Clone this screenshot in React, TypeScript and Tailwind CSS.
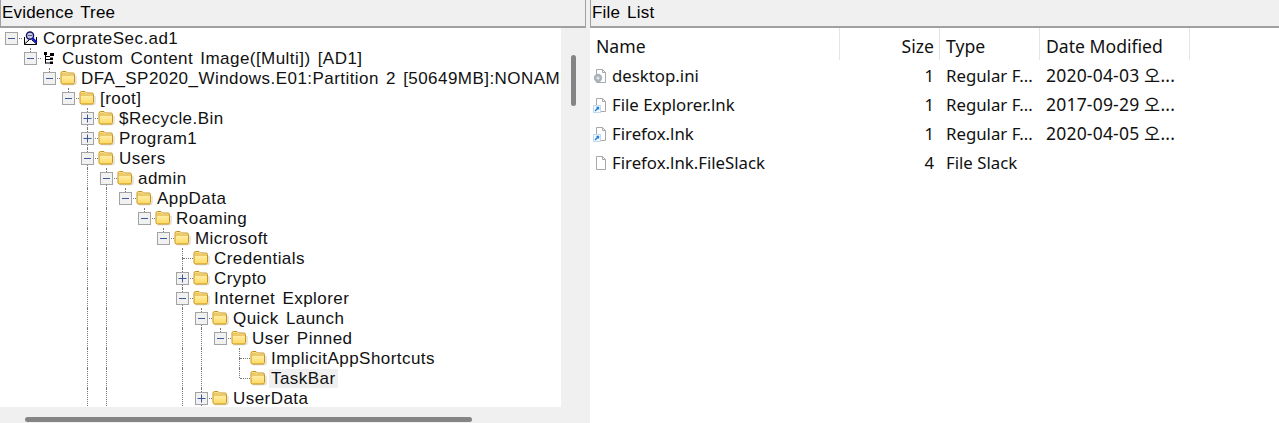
type TreeNode = {
  label: string;
  icon?: "evidence" | "tree" | "folder";
  open?: boolean;
  closed?: boolean;
  more?: boolean;
  selected?: boolean;
  children?: TreeNode[];
};

const tree: TreeNode = {
  label: "CorprateSec.ad1",
  icon: "evidence",
  open: true,
  children: [
    {
      label: "Custom Content Image([Multi]) [AD1]",
      icon: "tree",
      open: true,
      children: [
        {
          label: "DFA_SP2020_Windows.E01:Partition 2 [50649MB]:NONAME",
          open: true,
          children: [
            {
              label: "[root]",
              open: true,
              children: [
                { label: "$Recycle.Bin", closed: true, more: true },
                { label: "Program1", closed: true, more: true },
                {
                  label: "Users",
                  open: true,
                  more: true,
                  children: [
                    {
                      label: "admin",
                      open: true,
                      more: true,
                      children: [
                        {
                          label: "AppData",
                          open: true,
                          children: [
                            {
                              label: "Roaming",
                              open: true,
                              children: [
                                {
                                  label: "Microsoft",
                                  open: true,
                                  children: [
                                    { label: "Credentials", more: true },
                                    { label: "Crypto", closed: true, more: true },
                                    {
                                      label: "Internet Explorer",
                                      open: true,
                                      more: true,
                                      children: [
                                        {
                                          label: "Quick Launch",
                                          open: true,
                                          more: true,
                                          children: [
                                            {
                                              label: "User Pinned",
                                              open: true,
                                              children: [
                                                { label: "ImplicitAppShortcuts", more: true },
                                                { label: "TaskBar", selected: true },
                                              ],
                                            },
                                          ],
                                        },
                                        { label: "UserData", closed: true, more: true },
                                      ],
                                    },
                                  ],
                                },
                              ],
                            },
                          ],
                        },
                      ],
                    },
                  ],
                },
              ],
            },
          ],
        },
      ],
    },
  ],
};

const files = [
  { name: "desktop.ini", icon: "ini", size: "1", type: "Regular F...", date: "2020-04-03 오..." },
  { name: "File Explorer.lnk", icon: "lnk", size: "1", type: "Regular F...", date: "2017-09-29 오..." },
  { name: "Firefox.lnk", icon: "lnk", size: "1", type: "Regular F...", date: "2020-04-05 오..." },
  { name: "Firefox.lnk.FileSlack", icon: "blank", size: "4", type: "File Slack", date: "" },
];

function FolderIcon() {
  return (
    <svg width="17" height="16" viewBox="0 0 17 16" className="ml-[1px]">
      <defs>
        <linearGradient id="fold" x1="0" y1="0" x2="0" y2="1">
          <stop offset="0" stopColor="#fff8cc" />
          <stop offset="1" stopColor="#ffd95e" />
        </linearGradient>
      </defs>
      <path d="M2.5 14.8H14.5Q16 14.8 16 13V6" fill="none" stroke="#d5d0bd" />
      <path
        d="M1 4V3Q1 1.5 2.5 1.5H6L7.5 3H13Q14.5 3 14.5 4.5V12.5Q14.5 14 13 14H2.5Q1 14 1 12.5Z"
        fill="url(#fold)"
        stroke="#c8931c"
      />
      <path d="M1.5 5H14" stroke="#d8a42a" />
      <path d="M2 2.5H6L7 4H2Z" fill="#f0c552" />
    </svg>
  );
}

function EvidenceIcon() {
  return (
    <svg width="15" height="15" viewBox="0 0 15 15">
      <path d="M1.5 6V13.5H13.5V6" fill="#f4f4f4" stroke="#000" />
      <path d="M1.5 13L6 9M13.5 13L9 9" stroke="#000" />
      <circle cx="7" cy="4.6" r="3.6" fill="#c9c9d8" stroke="#12126a" strokeWidth="1.4" />
      <path d="M5 4.5H9" stroke="#5a5a8a" />
      <path d="M9.5 7.2L13.5 11.5" stroke="#1414d0" strokeWidth="2.2" />
    </svg>
  );
}

function TreeIcon() {
  return (
    <svg width="14" height="14" viewBox="0 0 14 14">
      <path d="M3.5 2V12.5M3.5 5.5H8M3.5 8.5H8M3.5 12H8" stroke="#000" fill="none" />
      <rect x="2" y="1" width="3" height="3" fill="#000" />
      <rect x="8" y="2" width="4" height="3" fill="#000" />
      <rect x="8" y="6.5" width="3" height="2.5" fill="#000" />
      <rect x="8" y="10.5" width="3" height="2.5" fill="#000" />
    </svg>
  );
}

function Expander({ open }: { open?: boolean }) {
  return (
    <span className="absolute left-[3px] top-[4px] flex h-[13px] w-[13px] items-center justify-center border border-[#a3a3a3] bg-[#f1f1f1]">
      <svg width="11" height="11" viewBox="0 0 11 11">
        <path d={open ? "M2 5.5H9" : "M1.5 5.5H9.5M5.5 1.5V9.5"} stroke="#3c5a98" />
      </svg>
    </span>
  );
}

function TreeRow({ node, guides, depth }: { node: TreeNode; guides: boolean[]; depth: number }) {
  return (
    <>
      <div className="flex h-5 items-center whitespace-nowrap">
        {guides.map((on, i) => (
          <div key={i} className="h-full w-[19px] shrink-0">
            {on && <div className="ml-[9px] h-full border-l border-dotted border-[#777]" />}
          </div>
        ))}
        <div className="relative h-full w-[19px] shrink-0">
          {depth > 0 && (
            <div className="absolute left-[9px] top-0 h-[10px] border-l border-dotted border-[#777]" />
          )}
          {node.more && (
            <div className="absolute left-[9px] top-[10px] h-[10px] border-l border-dotted border-[#777]" />
          )}
          <div className="absolute left-[10px] top-[10px] w-[10px] border-t border-dotted border-[#777]" />
          {(node.open || node.closed) && <Expander open={node.open} />}
        </div>
        <div className="flex w-5 shrink-0 items-center">
          {node.icon === "evidence" ? (
            <span className="ml-[2px]"><EvidenceIcon /></span>
          ) : node.icon === "tree" ? (
            <span className="ml-[2px]"><TreeIcon /></span>
          ) : (
            <FolderIcon />
          )}
        </div>
        <span
          className={
            "px-[2px] text-[17px] leading-[19px] tracking-[0.45px] [word-spacing:2px] text-[#111] " +
            (node.selected ? "bg-[#f0f0f0]" : "")
          }
        >
          {node.label}
        </span>
      </div>
      {node.children?.map((child) => (
        <TreeRow key={child.label} node={child} guides={[...guides, !!node.more]} depth={depth + 1} />
      ))}
    </>
  );
}

function FileIcon({ kind }: { kind: string }) {
  return (
    <svg width="16" height="16" viewBox="0 0 16 16" className="shrink-0">
      <path d="M3.5 1.5H9.5L12.5 4.5V14.5H3.5Z" fill="#fff" stroke="#a8a8a8" />
      <path d="M9.5 1.5V4.5H12.5" fill="none" stroke="#a8a8a8" />
      {kind === "ini" && (
        <>
          <circle cx="5" cy="10" r="4.2" fill="#a9b3ba" />
          <circle cx="5" cy="10" r="1.6" fill="#e4e8ea" />
        </>
      )}
      {kind === "lnk" && (
        <>
          <rect x="0.5" y="8.5" width="7" height="7" fill="#f2f8ff" stroke="#c6d9ec" />
          <path d="M2 14L5.5 10.5M3.5 10.5H5.5V12.5" stroke="#1a7fd8" strokeWidth="1.3" fill="none" />
        </>
      )}
    </svg>
  );
}

export default function App() {
  return (
    <div className="flex h-[423px] w-[1279px] overflow-hidden bg-[#f0f0f0]">
      <div className="flex w-[590px] shrink-0 flex-col">
        <div className="mr-[4px] h-[28px] border-r border-b-2 border-l border-[#a0a0a0] pl-[1px] font-['Liberation_Sans',sans-serif] text-[17px] leading-[25px] tracking-[0.2px] [word-spacing:2px] text-black">
          Evidence Tree
        </div>
        <div className="flex min-h-0 flex-1 flex-col">
          <div className="flex h-[379px] shrink-0">
            <div className="w-[561px] shrink-0 overflow-hidden bg-white pl-[2px] font-['Liberation_Sans',sans-serif]">
              <TreeRow node={tree} guides={[]} depth={0} />
            </div>
            <div className="flex-1 pl-[10px] pt-[27px]">
              <div className="h-[51px] w-[5px] rounded-full bg-[#858585]" />
            </div>
          </div>
          <div className="pl-[25px] pt-[10px]">
            <div className="h-[5px] w-[447px] rounded-full bg-[#858585]" />
          </div>
        </div>
      </div>

      <div className="flex min-w-0 flex-1 flex-col font-['Noto_Sans','Noto_Sans_CJK_KR',sans-serif]">
        <div className="h-[28px] border-b-2 border-l border-[#a0a0a0] pl-[1px] font-['Liberation_Sans',sans-serif] text-[17px] leading-[25px] tracking-[0.2px] [word-spacing:2px] text-black">
          File List
        </div>
        <div className="flex-1 bg-white text-[#111]">
          <div className="flex h-[32px] items-center text-[17.6px]">
            <div className="h-full w-[250px] border-r border-[#e5e5e5] pl-[6px] leading-[37px]">Name</div>
            <div className="h-full w-[100px] border-r border-[#e5e5e5] pr-[5px] text-right leading-[37px]">Size</div>
            <div className="h-full w-[100px] border-r border-[#e5e5e5] pl-[6px] leading-[37px]">Type</div>
            <div className="h-full w-[150px] border-r border-[#e5e5e5] pl-[6px] leading-[37px]">Date Modified</div>
          </div>
          <div className="pt-[1px] text-[16.8px]">
            {files.map((f) => (
              <div key={f.name} className="flex h-[29px] items-center whitespace-nowrap">
                <div className="flex w-[250px] items-center gap-[3px] pl-[3px]">
                  <FileIcon kind={f.icon} />
                  <span>{f.name}</span>
                </div>
                <div className="w-[100px] pr-[6px] text-right">{f.size}</div>
                <div className="w-[100px] pl-[6px]">{f.type}</div>
                <div className="w-[150px] pl-[6px] text-[17.5px] tracking-[0.2px]">{f.date}</div>
              </div>
            ))}
          </div>
        </div>
      </div>
    </div>
  );
}
